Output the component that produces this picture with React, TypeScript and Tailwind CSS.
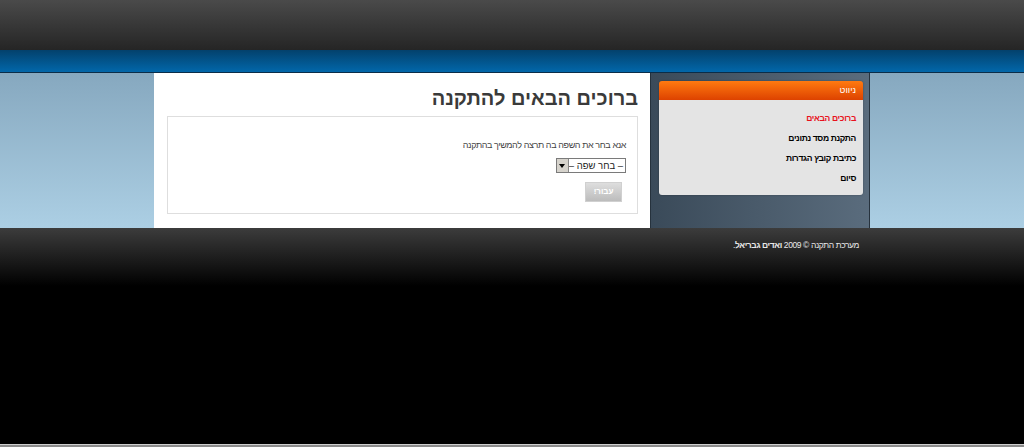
import React from "react";

export default function App() {
  const font = { fontFamily: '"Liberation Sans", "DejaVu Sans", Arial, sans-serif' };
  return (
    <div className="w-[1024px] h-[447px] flex flex-col overflow-hidden bg-black" style={font} dir="rtl">
      <div className="h-[50px] bg-[linear-gradient(to_bottom,#4a4a4a,#252525)]" />
      <div className="h-[23px] bg-[linear-gradient(to_bottom,#03416c,#0267aa)] border-b border-[#0b2d48]" />
      <div className="h-[155px] bg-[linear-gradient(to_bottom,#86a8bf,#accfe4)]">
        <div className="w-[716px] h-full mx-auto flex">
          <div className="w-[220px] h-full border-l border-r border-[#26323d] bg-[linear-gradient(to_right,#3a4a59,#5a6c7d)] px-[6px] pt-[8px]">
            <div className="w-[204px] rounded-[3px] overflow-hidden shadow-[0_0_2px_rgba(0,0,0,0.3)]">
              <div className="h-[19px] bg-[linear-gradient(to_bottom,#ff7a10,#dd4200)] text-white text-[9px] leading-[19px] pr-[7px]">
                ניווט
              </div>
              <div className="bg-[#e4e4e4] pt-[8px] pb-[7px] pr-[7px] text-[8.5px] tracking-[-0.35px] font-bold leading-[20px]">
                <div className="text-[#e8121c]">ברוכים הבאים</div>
                <div className="text-black">התקנת מסד נתונים</div>
                <div className="text-black">כתיבת קובץ הגדרות</div>
                <div className="text-black">סיום</div>
              </div>
            </div>
          </div>
          <div className="flex-1 h-full bg-white pr-[12px] pl-[13px] pt-[13px]">
            <h1 className="text-[20px] font-bold text-[#3a3a3a] leading-[24px]">
              ברוכים הבאים להתקנה
            </h1>
            <div className="mt-[6px] h-[98px] border border-[#dedede] pr-[11px] pt-[22px]">
              <div className="text-[9px] tracking-[-0.4px] text-[#444] leading-[12px]">
                אנא בחר את השפה בה תרצה להמשיך בהתקנה
              </div>
              <div className="mt-[7px] flex">
                <div className="w-[70px] h-[15px] border border-[#7a7a7a] bg-white flex items-center justify-between">
                  <span className="text-[9.5px] whitespace-nowrap text-[#222] pr-[2px] leading-[13px]">– בחר שפה –</span>
                  <span className="w-[12px] h-[13px] shrink-0 bg-[#d6d3cc] border-r border-[#888] flex items-center justify-center">
                    <span className="w-0 h-0 border-l-[3px] border-r-[3px] border-t-[4px] border-l-transparent border-r-transparent border-t-black" />
                  </span>
                </div>
              </div>
              <div className="mt-[9px] flex pr-[4px]">
                <div className="w-[37px] h-[20px] bg-[linear-gradient(to_bottom,#dedede,#bcbcbc)] border border-[#d0d0d0] text-white text-[8px] font-bold flex items-center justify-center">
                  עבור!
                </div>
              </div>
            </div>
          </div>
        </div>
      </div>
      <div className="flex-1 bg-[linear-gradient(to_bottom,#3c3c3c_0px,#000_58px)]">
        <div className="w-[716px] mx-auto pr-[11px] pt-[12px] text-[8.5px] tracking-[-0.4px] text-[#e8e8e8] leading-[11px]">
          מערכת התקנה © 2009 <b>ואדים גבריאל</b>.
        </div>
      </div>
      <div className="h-[1px] bg-[#cfcfcf]" />
      <div className="h-[2px] bg-[#8c8c8c]" />
    </div>
  );
}
